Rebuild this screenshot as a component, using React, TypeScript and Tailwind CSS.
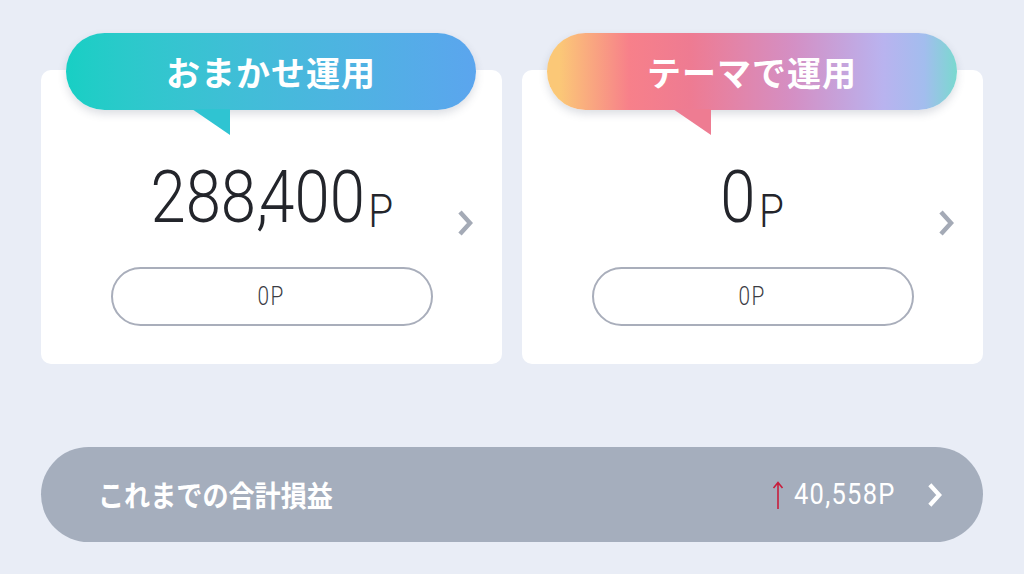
import React from 'react';

const jp = { fontFamily: '"Noto Sans CJK JP", "Noto Sans", sans-serif' };
const num = { fontFamily: 'Roboto, "Liberation Sans", sans-serif' };

function Chevron({ className }: { className: string }) {
  return (
    <svg viewBox="0 0 16 30" className={className} fill="none">
      <path d="M3 4 L13 15 L3 26" stroke="currentColor" strokeWidth="4.5" strokeLinejoin="miter" />
    </svg>
  );
}

function Bubble({ label, gradient, tail }: { label: string; gradient: string; tail: string }) {
  return (
    <div className="absolute left-[25px] -top-[37px] w-[410px] h-[77px]">
      <div className={`relative h-full rounded-full ${gradient} shadow-[0_4px_8px_rgba(60,70,100,0.18)] flex items-center justify-center`}>
        <span className="text-white text-[34px] font-bold tracking-[1px]" style={jp}>
          {label}
        </span>
      </div>
      <div
        className={`absolute left-[126px] top-[76px] w-[38px] h-[26px] ${tail}`}
        style={{ clipPath: 'polygon(0 0, 100% 0, 100% 100%)' }}
      />
    </div>
  );
}

function Amount({ value }: { value: string }) {
  const parts = value.split(',');
  return (
    <div className="flex items-end scale-x-[0.88] text-[#23252b]" style={num}>
      <span className="text-[72px] leading-none font-light">
        {parts.map((p, i) => (
          <React.Fragment key={i}>
            {i > 0 && <span className="inline-block -mr-[10px]">,</span>}
            {p}
          </React.Fragment>
        ))}
      </span>
      <span className="text-[46px] leading-none font-light ml-[4px]">P</span>
    </div>
  );
}

function Card({
  label,
  gradient,
  tail,
  value,
}: {
  label: string;
  gradient: string;
  tail: string;
  value: string;
}) {
  return (
    <div className="relative w-[461px] h-[294px] bg-white rounded-[10px] flex flex-col items-center">
      <Bubble label={label} gradient={gradient} tail={tail} />
      <div className="mt-[84px] h-[80px] flex items-end">
        <Amount value={value} />
      </div>
      <Chevron className="absolute left-[416px] top-[138px] w-[16px] h-[30px] text-[#a4aab6]" />
      <div className="mt-[33px] w-[322px] h-[59px] rounded-full border-2 border-[#a9aebb] flex items-center justify-center">
        <span className="inline-block text-[26px] font-light text-[#3a3c44] scale-x-[0.8] tracking-[2px]" style={num}>
          0P
        </span>
      </div>
    </div>
  );
}

export default function App() {
  return (
    <div className="w-[1024px] h-[574px] bg-[#e9edf6] overflow-hidden">
      <div className="flex gap-[20px] pl-[41px] pt-[70px]">
        <Card
          label="おまかせ運用"
          gradient="bg-gradient-to-r from-[#17cfc4] to-[#5ba5ee]"
          tail="bg-[#2fc4d2]"
          value="288,400"
        />
        <Card
          label="テーマで運用"
          gradient="bg-[linear-gradient(90deg,#fbc877_3%,#f7808a_20%,#ee7b92_35%,#d48fc4_60%,#b9b3ef_82%,#a3bdee_92%,#7ad9cf_100%)]"
          tail="bg-[#ee7c92]"
          value="0"
        />
      </div>
      <div className="mt-[83px] ml-[41px] w-[942px] h-[95px] rounded-full bg-[#a5aebd] flex items-center pl-[57px] pr-[41px]">
        <span className="inline-block text-white text-[29px] font-bold scale-x-[0.9] origin-left whitespace-nowrap" style={jp}>
          これまでの合計損益
        </span>
        <div className="ml-auto flex items-center">
          <svg viewBox="0 0 12 30" className="w-[12px] h-[30px] text-[#c81d3c]" fill="none">
            <path d="M6 29 V3 M1.5 8 L6 2.5 L10.5 8" stroke="currentColor" strokeWidth="1.6" />
          </svg>
          <div className="ml-[10px] w-[104px]">
            <span className="inline-block text-white text-[30px] leading-none font-normal scale-x-[0.85] origin-left tracking-[1.5px] whitespace-nowrap" style={num}>
              40,558P
            </span>
          </div>
          <Chevron className="ml-[29px] w-[15px] h-[28px] text-white" />
        </div>
      </div>
    </div>
  );
}
